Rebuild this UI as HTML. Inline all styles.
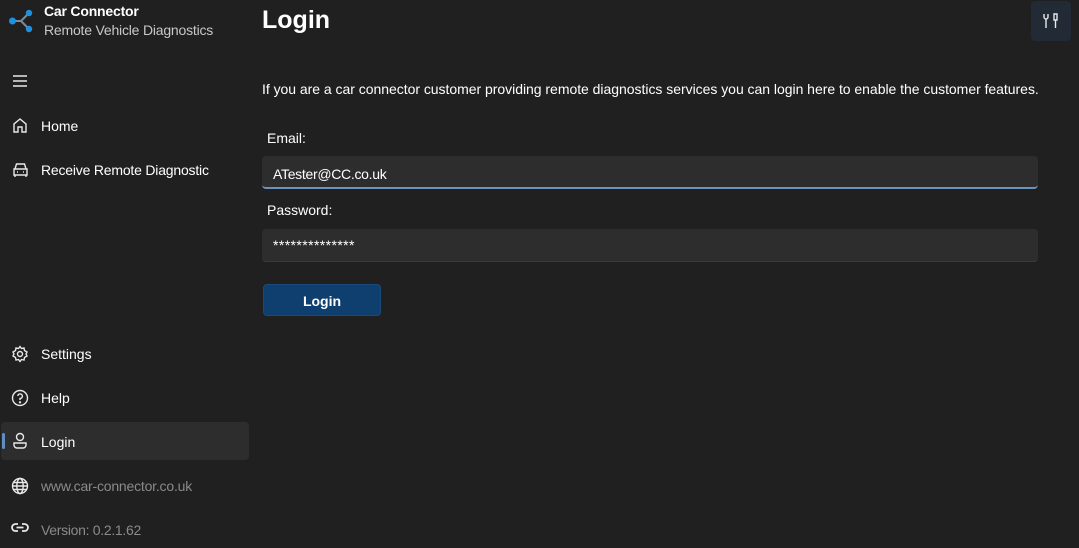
<!DOCTYPE html><html><head><style>
body{margin:0;width:1079px;height:548px;background:#202020;font-family:"Liberation Sans",sans-serif;color:#fff;position:relative;overflow:hidden}
.a{position:absolute}
.t{font-size:14px;white-space:nowrap}
svg{position:absolute;fill:none;stroke:#e8e8e8;stroke-width:1.4}
</style></head><body>
<svg style="left:8px;top:8px" width="26" height="26"><path d="M4 13 L13 13 M13 13 L21 5 M13 13 L21 21" stroke="#7a8a9a" stroke-width="2"/><circle cx="4.5" cy="13" r="3.5" fill="#1e90e0" stroke="none"/><circle cx="21" cy="5" r="3.2" fill="#1e90e0" stroke="none"/><circle cx="21" cy="21" r="3.2" fill="#1e90e0" stroke="none"/></svg>
<div class="a t" style="left:44px;top:3px;font-weight:bold;letter-spacing:-0.2px">Car Connector</div>
<div class="a t" style="left:44px;top:22px;color:#c8c8c8;letter-spacing:-0.2px">Remote Vehicle Diagnostics</div>
<svg style="left:12px;top:74px" width="16" height="14"><path d="M1 2H15M1 7H15M1 12H15"/></svg>
<svg style="left:12px;top:117px" width="16" height="17"><path d="M2 15V7L8 2L14 7V15H10V10H6V15Z"/></svg>
<div class="a t" style="left:41px;top:118px">Home</div>
<svg style="left:12px;top:161px" width="17" height="17"><path d="M3 8L4.5 3H12.5L14 8M2 8H15V14H2ZM3 14V16M14 14V16M5 11H6M11 11H12"/></svg>
<div class="a t" style="left:41px;top:162px;letter-spacing:-0.2px">Receive Remote Diagnostic</div>
<svg style="left:11px;top:345px" width="18" height="18"><circle cx="9" cy="9" r="2.5"/><path d="M9 1.5L10.5 3.5L13 3 13.5 5.5 16 7 15 9 16 11 13.5 12.5 13 15 10.5 14.5 9 16.5 7.5 14.5 5 15 4.5 12.5 2 11 3 9 2 7 4.5 5.5 5 3 7.5 3.5Z"/></svg>
<div class="a t" style="left:41px;top:346px">Settings</div>
<svg style="left:11px;top:389px" width="18" height="18"><circle cx="9" cy="9" r="7.5"/><path d="M6.8 7A2.3 2.3 0 1 1 9 9.5V11"/><circle cx="9" cy="13.3" r=".5"/></svg>
<div class="a t" style="left:41px;top:390px">Help</div>
<div class="a" style="left:1px;top:422px;width:248px;height:38px;background:#2d2d2d;border-radius:4px"></div>
<div class="a" style="left:2px;top:433px;width:3px;height:16px;background:#5f8fc0;border-radius:2px"></div>
<svg style="left:12px;top:432px" width="16" height="18"><circle cx="8" cy="5" r="3.5"/><path d="M2 11H14V13A3 3 0 0 1 11 16H5A3 3 0 0 1 2 13Z"/></svg>
<div class="a t" style="left:41px;top:434px">Login</div>
<svg style="left:11px;top:477px" width="18" height="18"><circle cx="9" cy="9" r="7.5"/><ellipse cx="9" cy="9" rx="3.2" ry="7.5"/><path d="M1.5 9H16.5M2.5 5.5H15.5M2.5 12.5H15.5"/></svg>
<div class="a t" style="left:41px;top:478px;color:#8a8a8a;letter-spacing:-0.2px">www.car-connector.co.uk</div>
<svg style="left:11px;top:522px" width="18" height="12"><path d="M7 2H4.5A3.5 3.5 0 0 0 4.5 9H7M11 2H13.5A3.5 3.5 0 0 1 13.5 9H11M5.5 5.5H12.5" stroke-width="1.8"/></svg>
<div class="a t" style="left:41px;top:522px;color:#8a8a8a;letter-spacing:-0.3px">Version: 0.2.1.62</div>
<div class="a" style="left:262px;top:6px;font-size:25px;font-weight:bold">Login</div>
<div class="a" style="left:1031px;top:1px;width:40px;height:40px;background:#222a36;border-radius:4px"></div>
<svg style="left:1042px;top:12px" width="18" height="18"><path d="M2 2V5A2 2 0 0 0 6 5V2M4 7V16M12 2H15V8H12ZM13.5 8V16"/></svg>
<div class="a t" style="left:262px;top:81px;letter-spacing:-0.03px">If you are a car connector customer providing remote diagnostics services you can login here to enable the customer features.</div>
<div class="a t" style="left:267px;top:130px">Email:</div>
<div class="a" style="left:262px;top:156px;width:776px;height:31px;background:#2d2d2d;border-radius:4px;border-bottom:2px solid #6a92bc"></div>
<div class="a t" style="left:273px;top:166px;letter-spacing:-0.3px">ATester@CC.co.uk</div>
<div class="a t" style="left:267px;top:202px">Password:</div>
<div class="a" style="left:262px;top:229px;width:776px;height:32px;background:#2d2d2d;border-radius:4px;border-bottom:1px solid #3a3a3a"></div>
<div class="a t" style="left:273px;top:237px;font-size:14px;letter-spacing:0.4px">**************</div>
<div class="a" style="left:263px;top:284px;width:118px;height:32px;background:#0e3f6e;border-radius:4px;border:1px solid #1a4a7a;box-sizing:border-box"></div>
<div class="a t" style="left:263px;top:293px;width:118px;text-align:center;font-weight:bold">Login</div>
</body></html>
